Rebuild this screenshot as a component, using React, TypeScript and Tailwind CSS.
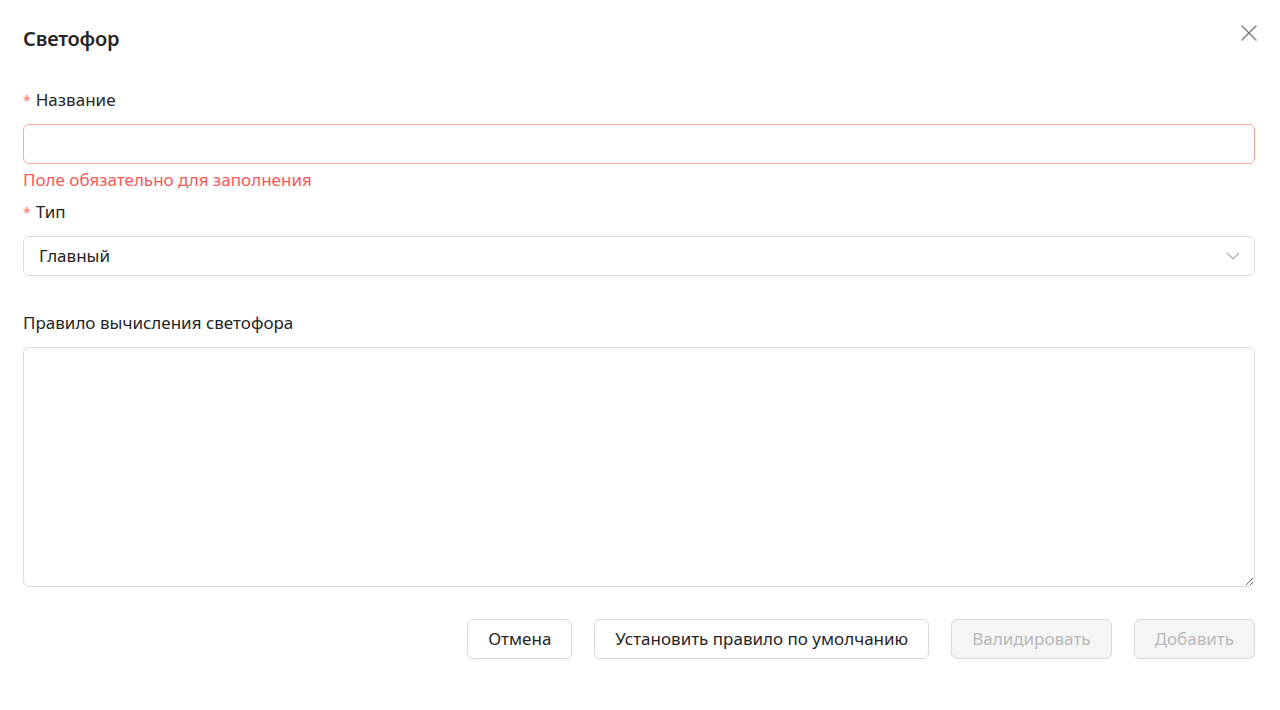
const font = { fontFamily: '"Noto Sans", "Open Sans", sans-serif' };

function Label({ children, required }: { children: string; required?: boolean }) {
  return (
    <div className="flex items-center h-6 text-[17px] text-[#262626]">
      {required && <span className="text-[#ff7070] mr-[5px] text-[14px]">*</span>}
      {children}
    </div>
  );
}

export default function App() {
  return (
    <div className="w-[1280px] h-[710px] bg-white pl-[23px] pr-[25px] pt-[27px] text-[#262626]" style={font}>
      <div className="flex items-center justify-between h-6">
        <h1 className="text-[20px] font-semibold tracking-[-0.2px] text-[#262626]">Светофор</h1>
        <svg width="16" height="16" viewBox="0 0 16 16" className="-mr-[2px] -mt-[12px]" stroke="#7d7d7d" strokeWidth="1.4" strokeLinecap="round">
          <line x1="1" y1="1" x2="15" y2="15" />
          <line x1="15" y1="1" x2="1" y2="15" />
        </svg>
      </div>

      <div className="mt-[37px]">
        <Label required>Название</Label>
        <input className="mt-3 block w-full h-10 rounded-[6px] border border-[#ffa3a3] px-4 text-[17px] outline-none" />
        <div className="mt-1 h-6 flex items-center text-[17px] text-[#f65a5a]">Поле обязательно для заполнения</div>
      </div>

      <div className="mt-2">
        <Label required>Тип</Label>
        <div className="mt-3 flex items-center justify-between h-10 rounded-[6px] border border-[#dcdcdc] pl-[15px] pr-[14px] text-[17px]">
          <span>Главный</span>
          <svg width="14" height="8" viewBox="0 0 14 8" fill="none" stroke="#ababab" strokeWidth="1.2">
            <polyline points="1,1 7,7 13,1" />
          </svg>
        </div>
      </div>

      <div className="mt-[35px]">
        <Label>Правило вычисления светофора</Label>
        <textarea className="mt-3 block w-full h-[240px] rounded-[6px] border border-[#dcdcdc] px-4 py-2 text-[17px] outline-none resize-y" />
      </div>

      <div className="mt-[32px] flex justify-end gap-[22px] text-[17px]">
        <button className="h-10 px-5 rounded-[6px] border border-[#d9d9d9] bg-white shadow-[0_2px_0_rgba(0,0,0,0.02)] text-[#262626]">Отмена</button>
        <button className="h-10 px-5 rounded-[6px] border border-[#d9d9d9] bg-white shadow-[0_2px_0_rgba(0,0,0,0.02)] text-[#262626]">Установить правило по умолчанию</button>
        <button disabled className="h-10 px-5 rounded-[6px] border border-[#d9d9d9] bg-[#f5f5f5] text-[#b8b8b8]">Валидировать</button>
        <button disabled className="h-10 px-5 rounded-[6px] border border-[#d9d9d9] bg-[#f5f5f5] text-[#b8b8b8]">Добавить</button>
      </div>
    </div>
  );
}
